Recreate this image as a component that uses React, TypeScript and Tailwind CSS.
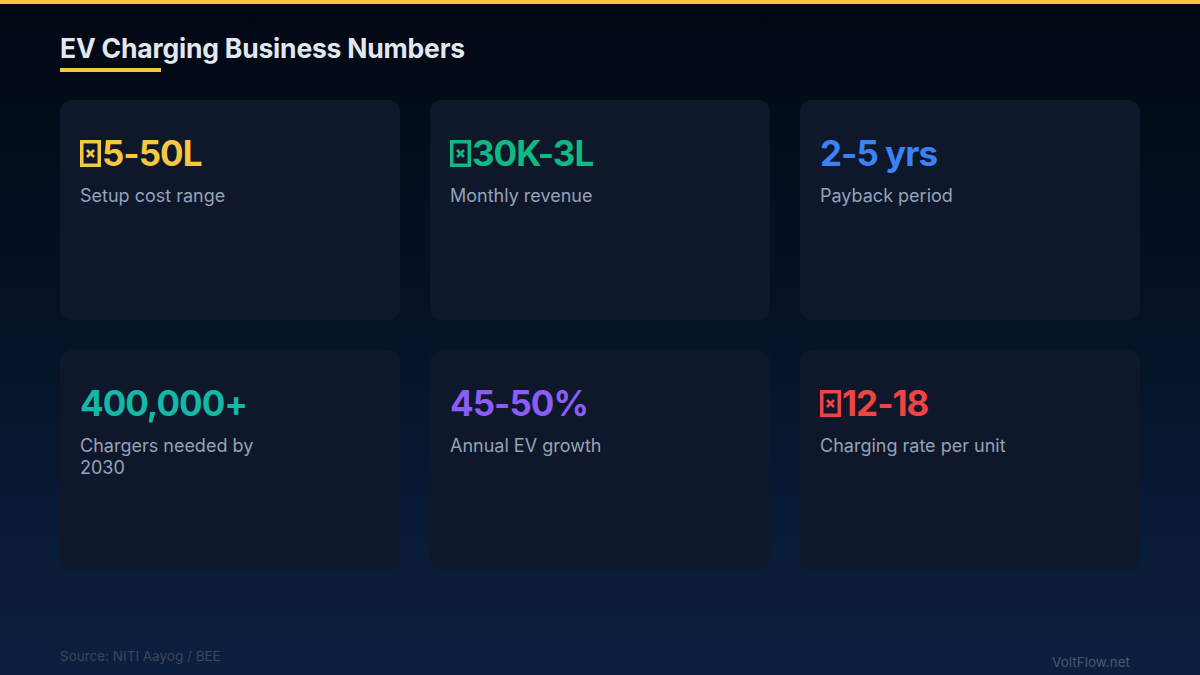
import React from 'react';

type Stat = {
  value: string;
  rupee?: boolean;
  label: string;
  color: string;
};

const stats: Stat[] = [
  { value: '5-50L', rupee: true, label: 'Setup cost range', color: 'text-[#f5c842]' },
  { value: '30K-3L', rupee: true, label: 'Monthly revenue', color: 'text-[#10b981]' },
  { value: '2-5 yrs', label: 'Payback period', color: 'text-[#3b82f6]' },
  { value: '400,000+', label: 'Chargers needed by 2030', color: 'text-[#14b8a6]' },
  { value: '45-50%', label: 'Annual EV growth', color: 'text-[#8b5cf6]' },
  { value: '12-18', rupee: true, label: 'Charging rate per unit', color: 'text-[#ef4444]' },
];

// the rupee sign shows up as a missing-glyph box in the original render
const RupeeBox = () => (
  <svg
    role="img"
    aria-label="₹"
    viewBox="0 0 21 27"
    className="inline-block w-[21px] h-[27px] mr-[1px] self-center"
  >
    <rect x="1.75" y="1.75" width="17.5" height="23.5" fill="none" stroke="currentColor" strokeWidth="3.5" />
    <path d="M7 10 L14 17 M14 10 L7 17" stroke="currentColor" strokeWidth="2.6" />
  </svg>
);

const StatCard: React.FC<{ stat: Stat }> = ({ stat }) => (
  <div className="h-[220px] rounded-xl bg-[#0f172a] px-5 pt-[32px]">
    <div className={`flex items-center text-[35px] leading-[42px] font-bold tracking-[-1px] ${stat.color}`}>
      {stat.rupee && <RupeeBox />}
      <span>{stat.value}</span>
    </div>
    <p className="mt-[11px] max-w-[190px] text-[18px] leading-[22px] text-[#94a3b8]">{stat.label}</p>
  </div>
);

export default function App() {
  return (
    <div
      className="w-[1200px] h-[675px] flex flex-col bg-gradient-to-b from-[#020812] to-[#0c1f3f] overflow-hidden"
      style={{ fontFamily: 'Inter, "Noto Sans", sans-serif' }}
    >
      <div className="h-1 w-full bg-[#f5c842]" />
      <div className="flex flex-col flex-1 px-[60px]">
        <div className="pt-[28px]">
          <h1 className="text-[26.5px] leading-[33px] font-bold tracking-[-0.2px] text-[#e2e8f0]">
            EV Charging Business Numbers
          </h1>
          <div className="mt-[3px] h-1 w-[101px] bg-[#f5c842]" />
        </div>

        <div className="mt-[28px] grid grid-cols-3 gap-[30px]">
          {stats.map((s) => (
            <StatCard key={s.label} stat={s} />
          ))}
        </div>

        <div className="flex-1" />

        <div className="flex justify-between items-end pr-[10px] pb-[3px]">
          <span className="mb-[6px] text-[13.5px] leading-[20px] text-[#3a475f]">Source: NITI Aayog / BEE</span>
          <span className="text-[13.5px] leading-[20px] text-[#4b5870]">VoltFlow.net</span>
        </div>
      </div>
    </div>
  );
}
